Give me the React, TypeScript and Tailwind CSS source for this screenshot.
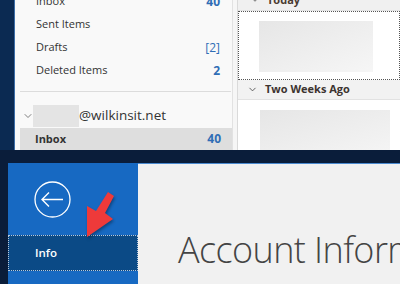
import { ChevronDown } from "lucide-react";

const font = { fontFamily: '"Open Sans", "Noto Sans", sans-serif' };

function FolderRow({ name, count, bracket }: { name: string; count?: string; bracket?: boolean }) {
  return (
    <div className="flex h-[23px] items-center justify-between pl-[16px] pr-[12px] text-[11px] text-[#333]">
      <span>{name}</span>
      {count && (
        <span className={bracket ? "text-[12px] text-[#2f6db5]" : "text-[12px] font-bold text-[#2f6db5]"}>{count}</span>
      )}
    </div>
  );
}

function ArrowMark() {
  return (
    <svg width="50" height="60" viewBox="0 0 50 60" className="absolute left-[78px] top-[186px]" style={{ filter: "drop-shadow(1px 2px 1.5px rgba(0,0,0,0.35))" }}>
      <polygon points="30,6 36,10 27,27 35,33 9,51 9,20 18,25" fill="#ee3a3a" />
    </svg>
  );
}

export default function App() {
  return (
    <div className="relative h-[284px] w-[400px] overflow-hidden bg-[#0a1d3a]" style={font}>
      {/* top: mail window */}
      <div className="flex h-[150px]">
        <div className="w-[14px] bg-[#0b2a52]" />
        <div className="w-[1px] bg-[#3d6ea8]" />
        <div className="flex w-[217px] flex-col bg-[#f9f9f9] pl-[5px]">
          <div className="-mt-[10px]">
            <FolderRow name="Inbox" count="40" />
            <FolderRow name="Sent Items" />
            <FolderRow name="Drafts" count="[2]" bracket />
            <FolderRow name="Deleted Items" count="2" />
          </div>
          <div className="mt-[9px] mr-[1px] h-[1px] bg-[#dcdcdc]" />
          <div className="mt-[12px] flex h-[23px] items-center text-[13.5px] text-[#333]">
            <ChevronDown className="ml-[2px] h-[12px] w-[12px] text-[#555]" strokeWidth={1.5} />
            <div className="-ml-[1px] h-[22px] w-[46px] bg-[#e4e4e4]" />
            <span>@wilkinsit.net</span>
          </div>
          <div className="mt-[1px] flex flex-1 items-center justify-between bg-[#dedede] pl-[15px] pr-[11px] text-[11px] font-bold">
            <span className="text-[#333]">Inbox</span>
            <span className="text-[12px] text-[#2f6db5]">40</span>
          </div>
        </div>
        <div className="w-[5px] border-l border-[#e2e2e2] bg-[#f6f6f6]" />
        <div className="flex flex-1 flex-col border-l border-[#dadada] bg-white">
          <div className="relative h-[12px] overflow-hidden border-b border-[#e2e2e2] bg-[#f0f0f0]">
            <div className="absolute left-[12px] -top-[6px] flex items-center gap-[7px] text-[11px] font-bold leading-none text-[#4a3a30]">
              <ChevronDown className="h-[10px] w-[10px] text-[#555]" strokeWidth={2} />
              <span>Today</span>
            </div>
          </div>
          <div className="h-[69px] border border-dotted border-[#555] py-[9px] pl-[20px]">
            <div className="h-[51px] w-[114px] bg-gradient-to-br from-[#e6e6e6] to-[#f6f6f6]" />
          </div>
          <div className="flex h-[23px] items-center gap-[7px] border-b border-[#e2e2e2] bg-[#f2f2f2] pl-[9px] text-[11px] font-bold text-[#3d3430]">
            <ChevronDown className="h-[11px] w-[11px] text-[#555]" strokeWidth={2} />
            <span>Two Weeks Ago</span>
          </div>
          <div className="flex-1 pl-[22px] pt-[10px]">
            <div className="h-[40px] w-[130px] bg-gradient-to-br from-[#e6e6e6] to-[#f4f4f4]" />
          </div>
        </div>
      </div>

      {/* bottom: backstage */}
      <div className="mt-[13px] flex h-[121px]">
        <div className="w-[8px]" />
        <div className="flex w-[130px] flex-col bg-[#1769c2]">
          <div className="flex h-[72px] items-center pl-[26px]">
            <svg width="37" height="37" viewBox="0 0 37 37">
              <circle cx="18.5" cy="18.5" r="17.5" fill="none" stroke="white" strokeWidth="1.3" />
              <path d="M8 18.5 H29 M15 11.5 L8 18.5 L15 25.5" fill="none" stroke="white" strokeWidth="1.4" />
            </svg>
          </div>
          <div className="flex h-[36px] items-center border border-dotted border-[#b8c8dc] bg-[#0b4a86] pl-[26px] text-[11.5px] font-semibold text-white">
            Info
          </div>
        </div>
        <div className="flex-1 overflow-hidden border-t border-[#4a8ad0] bg-[#f1f1f1] pl-[40px] pt-[68px]">
          <div className="whitespace-nowrap text-[36px] font-light leading-none tracking-[-0.6px] text-[#444]">Account Information</div>
        </div>
      </div>

      <ArrowMark />
    </div>
  );
}
